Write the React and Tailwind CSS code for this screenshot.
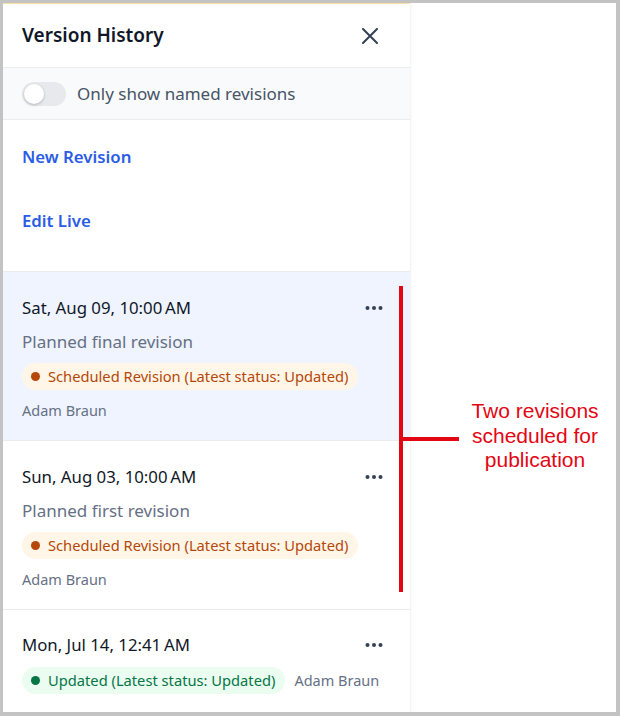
import React, { useState } from "react";

const revisions = [
  {
    id: 1,
    date: "Sat, Aug 09, 10:00\u202fAM",
    title: "Planned final revision",
    status: "Scheduled Revision (Latest status: Updated)",
    tone: "scheduled",
    author: "Adam Braun",
    active: true,
  },
  {
    id: 2,
    date: "Sun, Aug 03, 10:00\u202fAM",
    title: "Planned first revision",
    status: "Scheduled Revision (Latest status: Updated)",
    tone: "scheduled",
    author: "Adam Braun",
  },
];

function Dots() {
  return (
    <svg width="18" height="6" viewBox="0 0 18 6" className="text-[#344054]">
      <circle cx="2.5" cy="3" r="2" fill="currentColor" />
      <circle cx="9" cy="3" r="2" fill="currentColor" />
      <circle cx="15.5" cy="3" r="2" fill="currentColor" />
    </svg>
  );
}

function StatusBadge({ tone, children }) {
  const scheduled = tone === "scheduled";
  return (
    <span
      className={`inline-flex items-center h-[27px] pl-[9px] pr-[10px] rounded-full text-[14.7px] gap-[8px] ${
        scheduled ? "bg-[#fff6e8] text-[#b54708]" : "bg-[#ebfcf1] text-[#067647]"
      }`}
    >
      <span
        className={`w-[9px] h-[9px] rounded-full ${
          scheduled ? "bg-[#b54708]" : "bg-[#067647]"
        }`}
      />
      {children}
    </span>
  );
}

export default function App() {
  const [namedOnly, setNamedOnly] = useState(false);

  return (
    <div
      className="w-[620px] h-[716px] bg-[#c3c3c3] pt-[3px] pl-[3px] pr-[4px] pb-[4px]"
      style={{ fontFamily: '"Noto Sans", "Open Sans", sans-serif' }}
    >
      <div className="relative flex h-full bg-white overflow-hidden">
        {/* side panel */}
        <aside className="w-[407px] h-full flex flex-col border-t border-[#f7e3a6] shadow-[1px_0_2px_rgba(16,24,40,0.06)]">
          <header className="h-[64px] shrink-0 flex items-center justify-between pl-[19px] pr-[32px] border-b border-[#eaecf0]">
            <h1 className="text-[19px] font-semibold text-[#101828]">Version History</h1>
            <svg width="16" height="16" viewBox="0 0 16 16" className="text-[#344054]">
              <path d="M1 1L15 15M15 1L1 15" stroke="currentColor" strokeWidth="2" strokeLinecap="round" />
            </svg>
          </header>

          <div className="h-[52px] shrink-0 flex items-center gap-[11px] pl-[19px] bg-[#f9fafb] border-b border-[#eaecf0]">
            <button
              onClick={() => setNamedOnly((v) => !v)}
              className={`relative w-[44px] h-[24px] rounded-full ${namedOnly ? "bg-[#2b5ce6]" : "bg-[#e8e9ec]"}`}
            >
              <span
                className={`absolute top-[2px] w-[20px] h-[20px] rounded-full bg-white shadow-[0_1px_3px_rgba(16,24,40,0.25)] ${
                  namedOnly ? "left-[22px]" : "left-[2px]"
                }`}
              />
            </button>
            <span className="text-[17px] text-[#475467]">Only show named revisions</span>
          </div>

          <div className="shrink-0 flex flex-col gap-[40px] pt-[25px] pb-[38px] pl-[19px] border-b border-[#eaecf0]">
            <a className="leading-[24px] text-[16.8px] font-semibold text-[#2b5ce6]">New Revision</a>
            <a className="leading-[24px] text-[16.8px] font-semibold text-[#2b5ce6]">Edit Live</a>
          </div>

          {revisions.map((r) => (
            <div
              key={r.id}
              className={`shrink-0 pt-[24px] pb-[20px] pl-[19px] pr-[27px] border-b border-[#eaecf0] ${
                r.active ? "bg-[#eff4fe]" : "bg-white"
              }`}
            >
              <div className="flex items-center justify-between h-[24px]">
                <span className="text-[16.8px] text-[#101828]">{r.date}</span>
                <Dots />
              </div>
              <div className="mt-[10px] leading-[24px] text-[17px] text-[#667085]">{r.title}</div>
              <div className="mt-[9px]">
                <StatusBadge tone={r.tone}>{r.status}</StatusBadge>
              </div>
              <div className="mt-[10px] leading-[20px] text-[14.5px] text-[#667085]">{r.author}</div>
            </div>
          ))}

          <div className="pt-[23px] pl-[19px] pr-[27px]">
            <div className="flex items-center justify-between h-[24px]">
              <span className="text-[16.8px] text-[#101828]">Mon, Jul 14, 12:41{"\u202f"}AM</span>
              <Dots />
            </div>
            <div className="mt-[10px] flex items-center gap-[9px]">
              <StatusBadge tone="updated">Updated (Latest status: Updated)</StatusBadge>
              <span className="text-[14.5px] text-[#667085]">Adam Braun</span>
            </div>
          </div>
        </aside>

        {/* annotation bracket */}
        <div className="absolute left-[396px] top-[283px] w-[4px] h-[306px] bg-[#e30613]" />
        <div className="absolute left-[399px] top-[434px] w-[57px] h-[4px] bg-[#e30613]" />
        <p
          className="absolute left-[452px] top-[396px] w-[160px] text-center text-[21px] leading-[24.5px] text-[#e30613]"
          style={{ fontFamily: '"Liberation Sans", Arial, sans-serif' }}
        >
          Two revisions
          <br />
          scheduled for
          <br />
          publication
        </p>
      </div>
    </div>
  );
}
